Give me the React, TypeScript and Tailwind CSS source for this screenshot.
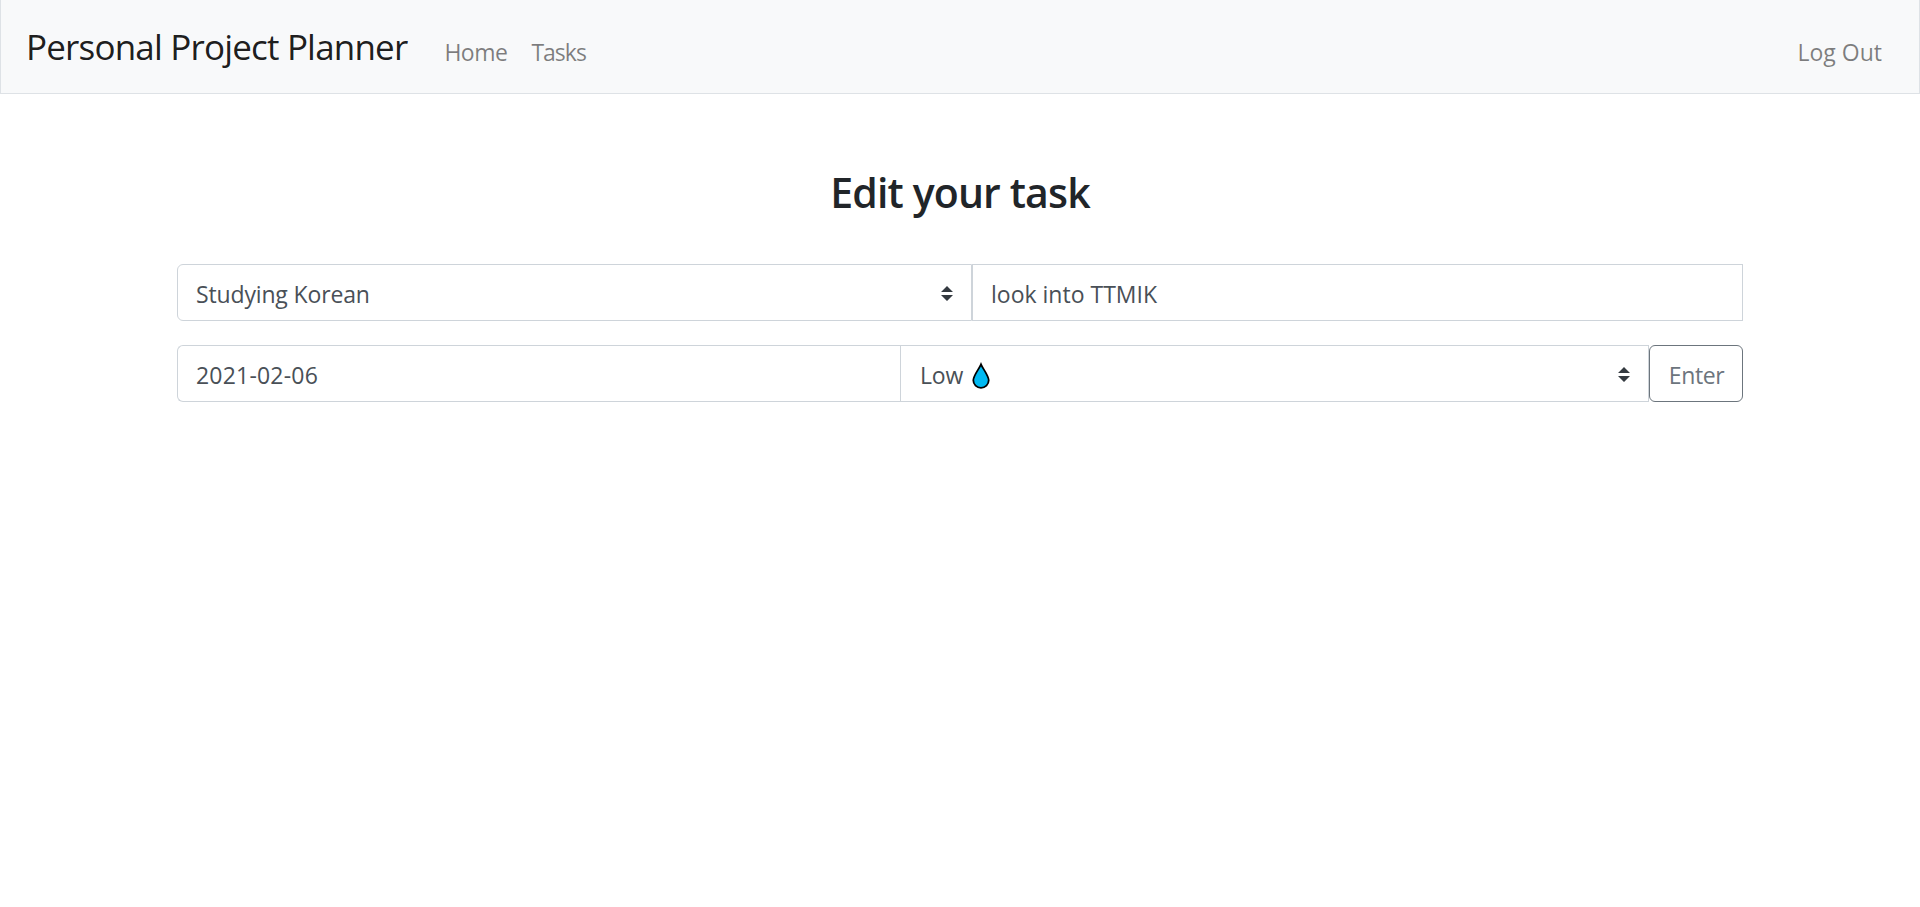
import React from "react";

function Caret() {
  return (
    <svg className="mt-px h-[15px] w-3 shrink-0" viewBox="0 0 4 5" preserveAspectRatio="none" aria-hidden="true">
      <path fill="#343a40" d="M2 0L0 2h4zm0 5L0 3h4z" />
    </svg>
  );
}

function Drop() {
  return (
    <svg className="mt-[3px] ml-[9px] h-[27px] w-[18px]" viewBox="0 0 18 27" aria-hidden="true">
      <path
        d="M9 2.4C7.400 6.400 1.300 13.600 1.300 18.300a7.700 7.500 0 0 0 15.400 0C16.700 13.600 10.600 6.400 9 2.400Z"
        fill="#00b9f2"
        stroke="#000"
        strokeWidth="1.8"
        strokeLinejoin="miter"
      />
    </svg>
  );
}

export default function App() {
  return (
    <div className="min-h-[907px] bg-white font-['Open_Sans','Noto_Sans',sans-serif] text-[23px] text-[#495057]">
      <nav className="flex h-[94px] items-baseline border border-t-0 border-[#dee2e6] bg-[#f8f9fa] pt-5 pr-[37px] pl-[25px]">
        <a className="text-[35px] leading-[54px] tracking-[-0.82px] whitespace-nowrap text-black/90">Personal Project Planner</a>
        <div className="ml-[37px] flex flex-1 items-baseline gap-6 text-black/50">
          <a className="relative top-px tracking-[-0.5px]">Home</a>
          <a className="relative top-px tracking-[-1px]">Tasks</a>
          <a className="relative top-px ml-auto">Log Out</a>
        </div>
      </nav>
      <main className="mx-auto w-[1566px] pt-[68px]">
        <h2 className="text-center text-[41px] leading-[60px] font-semibold tracking-[-0.85px] text-[#212529]">Edit your task</h2>
        <form className="mt-[42px] flex flex-col gap-6">
          <div className="flex h-[57px]">
            <div className="flex w-[795px] items-center justify-between rounded-l-[6px] border border-[#ced4da] pr-[18px] pl-[18px]">
              <span className="pt-1 tracking-[-0.15px]">Studying Korean</span>
              <Caret />
            </div>
            <div className="flex flex-1 items-center border border-[#ced4da] pl-[18px]">
              <span className="pt-1">look into TTMIK</span>
            </div>
          </div>
          <div className="flex h-[57px]">
            <div className="flex w-[723px] items-center rounded-l-[6px] border border-r-0 border-[#ced4da] pl-[18px]">
              <span className="pt-1 tracking-[0.2px]">2021-02-06</span>
            </div>
            <div className="flex w-[749px] items-center justify-between border border-[#ced4da] pr-[18px] pl-[19px]">
              <span className="flex items-center">
                <span className="pt-1 tracking-[-0.2px]">Low</span>
                <Drop />
              </span>
              <Caret />
            </div>
            <button type="button" className="flex flex-1 items-center justify-center rounded-[6px] border border-[#6c757d] text-[#6c757d]">
              <span className="pt-1 pl-px tracking-[-0.4px]">Enter</span>
            </button>
          </div>
        </form>
      </main>
    </div>
  );
}
